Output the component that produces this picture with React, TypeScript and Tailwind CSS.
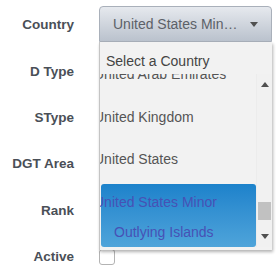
import React from "react";

const labels = ["Country", "D Type", "SType", "DGT Area", "Rank", "Active"];

const countries = ["United Arab Emirates", "United Kingdom", "United States"];

const Triangle: React.FC<{ up?: boolean; className?: string }> = ({ up, className }) => (
  <svg width="8" height="5" viewBox="0 0 8 5" className={className}>
    <path d={up ? "M0 5 L4 0 L8 5 Z" : "M0 0 L8 0 L4 5 Z"} fill="#505050" />
  </svg>
);

export default function App() {
  return (
    <div
      className="relative w-[280px] h-[273px] bg-white overflow-hidden"
      style={{ fontFamily: '"Liberation Sans", Arial, sans-serif' }}>
      <div className="flex flex-col pt-[2px]">
        {labels.map((label, idx) => (
          <div key={label} className="flex h-[46.4px] gap-[25px]">
            <div className="w-[74px] flex items-center justify-end">
              <span className="text-[13.5px] leading-[16px] font-bold text-[#4a4f57]">{label}</span>
            </div>
            {idx === 0 && (
              <div className="mt-[4px] w-[173px] h-[36px] flex items-center justify-between pl-[13px] pr-[13px] border border-[#a9b0ba] rounded-t-[4px] bg-gradient-to-b from-[#e6e9ee] to-[#bac2cd]">
                <span className="w-[131px] truncate text-[14px] leading-[16px] text-[#5c6168]">
                  United States Minor Outlying Islands
                </span>
                <Triangle className="mt-[1px]" />
              </div>
            )}
            {idx === 5 && (
              <div className="flex items-center">
                <div className="w-[16px] h-[16px] border border-[#b3b3b3] rounded-[3px] bg-white" />
              </div>
            )}
          </div>
        ))}
      </div>

      {/* dropdown list */}
      <div className="absolute left-[99px] top-[42px] w-[173px] h-[208px] flex flex-col bg-[#f2f2f2] border-l border-[#c4c4c4] shadow-[1px_2px_3px_rgba(0,0,0,0.3)]">
        <div className="h-[32px] pl-[6px] pt-[11px] text-[14px] leading-[16px] text-[#444]">Select a Country</div>
        <div className="flex h-[173px] overflow-hidden">
          <div className="flex-1 overflow-hidden">
            <div className="flex flex-col gap-[9.5px] mt-[-18px]">
              {countries.map((c) => (
                <div key={c} className="pt-[3px] text-[14px] leading-[30px] text-[#555] whitespace-nowrap">
                  <div className="ml-[-6px]">{c}</div>
                </div>
              ))}
              <div className="ml-[1px] h-[63px] pt-[3px] rounded-[3px] bg-gradient-to-b from-[#1c82cb] to-[#4ea4da] text-[14px] leading-[30px] text-[#4751b5] whitespace-nowrap">
                <div className="ml-[-7px]">United States Minor</div>
                <div className="ml-[13px]">Outlying Islands</div>
              </div>
            </div>
          </div>
          <div className="w-[16px] flex flex-col items-center bg-[#f1f1f1] border-l border-[#ececec]">
            <Triangle up className="mt-[8px]" />
            <div className="flex-1" />
            <div className="w-[13px] h-[18px] bg-[#c1c1c1]" />
            <Triangle className="mt-[14px] mb-[8px]" />
          </div>
        </div>
      </div>
    </div>
  );
}
